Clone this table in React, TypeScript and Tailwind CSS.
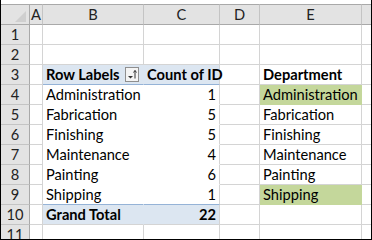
import React from "react";

const labels = ["Administration", "Fabrication", "Finishing", "Maintenance", "Painting", "Shipping"];
const counts = [1, 5, 5, 4, 6, 1];

const base = "border-r border-b border-[#d4d4d4] px-[3px] leading-[19px] whitespace-nowrap overflow-visible text-black";
const rh = "bg-[#e3e3e3] border-r border-b border-r-[#a9a9a9] border-b-[#c4c4c4] text-center leading-[19px] text-[#222]";

function FilterButton() {
  return (
    <div className="absolute right-[4px] top-[2px] w-[14px] h-[15px] border border-[#8f8f8f] bg-[#f4f4f4]">
      <svg width="12" height="13" viewBox="0 0 12 13" className="block">
        <polygon points="2,8 7,8 4.5,10.5" fill="#333" />
        <line x1="9" y1="2.5" x2="9" y2="10.5" stroke="#333" strokeWidth="1" />
        <polyline points="7.5,4.5 9,2.5 10.5,4.5" fill="none" stroke="#333" strokeWidth="1" />
      </svg>
    </div>
  );
}

export default function App() {
  const cells: React.ReactNode[] = [];

  // header row
  cells.push(
    <div key="corner" className="relative bg-[#e3e3e3] border-t border-t-[#a9a9a9] border-r border-r-[#a9a9a9] border-b border-b-[#a9a9a9]">
      <svg width="11" height="11" viewBox="0 0 11 11" className="absolute right-[3px] bottom-[2px]">
        <polygon points="11,0 11,11 0,11" fill="#cfcfcf" />
      </svg>
    </div>
  );
  ["A", "B", "C", "D", "E", ""].forEach((l, i) =>
    cells.push(
      <div
        key={"h" + i}
        className={
          i === 5
            ? "bg-[#e3e3e3] border-t border-t-[#a9a9a9] border-b border-b-[#a9a9a9] text-center leading-[19px] text-[#222]"
            : "bg-[#e3e3e3] border-t border-t-[#a9a9a9] border-r border-r-[#c4c4c4] border-b border-b-[#a9a9a9] text-center leading-[19px] text-[#222]"
        }
      >
        {l}
      </div>
    )
  );

  for (let r = 1; r <= 11; r++) {
    const last = r === 11;
    cells.push(
      <div key={"r" + r} className={last ? "bg-[#e3e3e3] border-r border-r-[#a9a9a9] text-center leading-[19px] text-[#222]" : rh}>
        {r}
      </div>
    );
    // A
    cells.push(<div key={"a" + r} className={last ? "border-r border-[#d4d4d4]" : base} />);
    // B
    if (r === 3) {
      cells.push(
        <div key={"b" + r} className="relative bg-[#dce6f1] border-r border-r-[#dce6f1] border-b border-b-[#95b3d7] px-[3px] leading-[19px] font-bold whitespace-nowrap text-black">
          Row Labels
          <FilterButton />
        </div>
      );
    } else if (r >= 4 && r <= 9) {
      cells.push(
        <div key={"b" + r} className={r === 9 ? "border-r border-r-white border-b border-b-[#95b3d7] px-[3px] leading-[19px] whitespace-nowrap text-black" : "border-r border-r-white border-b border-b-white px-[3px] leading-[19px] whitespace-nowrap text-black"}>
          {labels[r - 4]}
        </div>
      );
    } else if (r === 10) {
      cells.push(
        <div key={"b" + r} className="bg-[#dce6f1] border-r border-r-[#dce6f1] border-b border-b-[#d4d4d4] px-[3px] leading-[19px] font-bold whitespace-nowrap text-black">
          Grand Total
        </div>
      );
    } else {
      cells.push(<div key={"b" + r} className={last ? "border-r border-[#d4d4d4]" : base} />);
    }
    // C
    if (r === 3) {
      cells.push(
        <div key={"c" + r} className="bg-[#dce6f1] border-r border-r-[#d4d4d4] border-b border-b-[#95b3d7] px-[3px] leading-[19px] font-bold text-right whitespace-nowrap text-black">
          Count of ID
        </div>
      );
    } else if (r >= 4 && r <= 9) {
      cells.push(
        <div key={"c" + r} className={r === 9 ? "border-r border-r-[#d4d4d4] border-b border-b-[#95b3d7] px-[3px] leading-[19px] text-right text-black" : "border-r border-r-[#d4d4d4] border-b border-b-white px-[3px] leading-[19px] text-right text-black"}>
          {counts[r - 4]}
        </div>
      );
    } else if (r === 10) {
      cells.push(
        <div key={"c" + r} className="bg-[#dce6f1] border-r border-r-[#d4d4d4] border-b border-b-[#d4d4d4] px-[3px] leading-[19px] font-bold text-right text-black">
          22
        </div>
      );
    } else {
      cells.push(<div key={"c" + r} className={last ? "border-r border-[#d4d4d4]" : base} />);
    }
    // D
    cells.push(<div key={"d" + r} className={last ? "border-r border-[#d4d4d4]" : base} />);
    // E
    if (r === 3) {
      cells.push(<div key={"e" + r} className={base + " font-bold"}>Department</div>);
    } else if (r === 4 || r === 9) {
      cells.push(
        <div key={"e" + r} className="bg-[#c4d79b] border-r border-b border-[#c4d79b] px-[3px] leading-[19px] whitespace-nowrap text-black">
          {labels[r - 4]}
        </div>
      );
    } else if (r >= 5 && r <= 8) {
      cells.push(<div key={"e" + r} className={base}>{labels[r - 4]}</div>);
    } else {
      cells.push(<div key={"e" + r} className={last ? "border-r border-[#d4d4d4]" : base} />);
    }
    // F
    cells.push(<div key={"f" + r} className={last ? "" : "border-b border-[#d4d4d4]"} />);
  }

  return (
    <div
      className="w-[372px] h-[240px] bg-white border-l border-r border-b border-black overflow-hidden text-[14.67px]"
      style={{ fontFamily: "Lato, 'Liberation Sans', sans-serif" }}
    >
      <div className="h-[4px]" />
      <div className="grid grid-cols-[29px_13px_101px_76px_40px_102px_9px] grid-rows-[21px_repeat(10,20px)_14px]">
        {cells}
      </div>
    </div>
  );
}
